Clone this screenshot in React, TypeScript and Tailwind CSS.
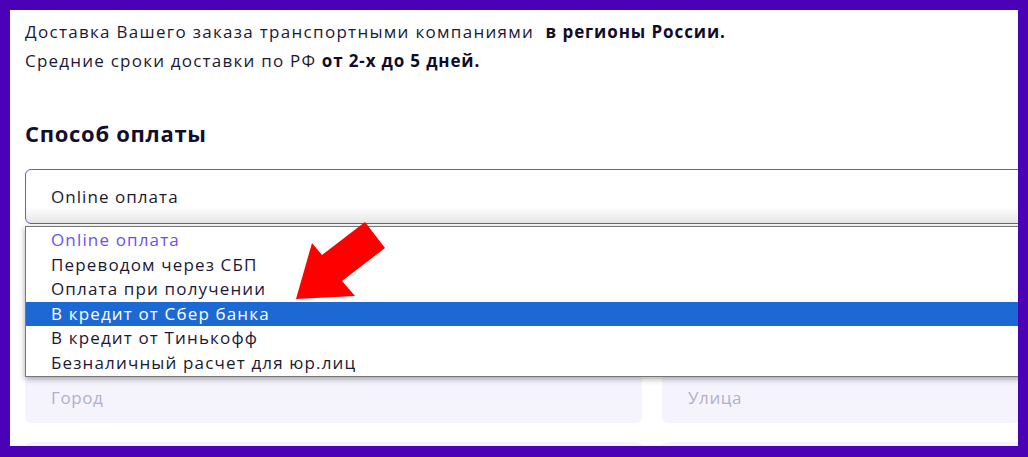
const options = [
  'Online оплата',
  'Переводом через СБП',
  'Оплата при получении',
  'В кредит от Сбер банка',
  'В кредит от Тинькофф',
  'Безналичный расчет для юр.лиц',
];

export default function App() {
  return (
    <div className="h-[457px] overflow-hidden bg-[#4b02b6] pt-[10px] pl-[10px] pr-[10px] pb-[11px] font-['Open_Sans',sans-serif]">
      <div className="relative h-full overflow-hidden bg-white">
        <div className="w-[1040px] pl-[15px] pt-[7px] text-[#1b1934]">
          {/* delivery note */}
          <p className="text-[17px] leading-[29px] tracking-[1.3px]">
            Доставка Вашего заказа транспортными компаниями&nbsp; <b className="font-bold tracking-[0.9px] text-[#0f0c2a]">в регионы России.</b>
          </p>
          <p className="text-[17px] leading-[29px] tracking-[1.22px]">
            Средние сроки доставки по РФ <b className="font-bold tracking-[0.85px] text-[#0f0c2a]">от 2-х до 5 дней.</b>
          </p>

          <h2 className="mt-[43px] text-[22px] font-bold leading-[30px] tracking-[0.7px] text-[#120f2e]">Способ оплаты</h2>

          {/* select with open list */}
          <div className="relative mt-[21px]">
            <div className="flex h-[55px] items-center rounded-[6px] border border-[#6d4ff2] bg-gradient-to-b from-white from-70% to-[#e6e6e6] pl-[25px] text-[17px] tracking-[1.05px] text-[#1b1934]">
              Online оплата
            </div>
            <ul className="absolute left-0 right-0 top-full z-10 mt-[2px] border border-[#777] bg-white py-[1px] text-[17px] tracking-[1.15px] shadow-[0_2px_6px_rgba(0,0,0,0.35)]">
              {options.map((o, i) => (
                <li
                  key={o}
                  className={
                    i === 3
                      ? 'h-[24.5px] bg-[#1c69d3] pl-[25px] leading-[24.5px] text-white'
                      : i === 0
                        ? 'h-[24.5px] pl-[25px] leading-[24.5px] text-[#6d4ff2]'
                        : 'h-[24.5px] pl-[25px] leading-[24.5px] text-[#1b1934]'
                  }
                >
                  {o}
                </li>
              ))}
            </ul>
          </div>

          {/* address fields */}
          <div className="mt-[143px] grid grid-cols-[617px_617px] gap-x-[20px] gap-y-[19px]">
            <div className="h-[56px] rounded-[6px] bg-[#f5f4fd] pl-[26px] pt-[18px] text-[17px] tracking-[0.6px] text-[#b3b0cb]">Город</div>
            <div className="h-[56px] rounded-[6px] bg-[#f5f4fd] pl-[26px] pt-[18px] text-[17px] tracking-[0.6px] text-[#b3b0cb]">Улица</div>
            <div className="h-[56px] rounded-[6px] bg-[#f5f4fd]" />
            <div className="h-[56px] rounded-[6px] bg-[#f5f4fd]" />
          </div>
        </div>

        {/* pointer arrow */}
        <svg className="pointer-events-none absolute left-0 top-0 z-20" width="1008" height="436" viewBox="10 10 1008 436">
          <polygon points="296,299 312,243 322,255 365,222 385,248 342,281 355,296" fill="#ff0000" />
        </svg>
      </div>
    </div>
  );
}
